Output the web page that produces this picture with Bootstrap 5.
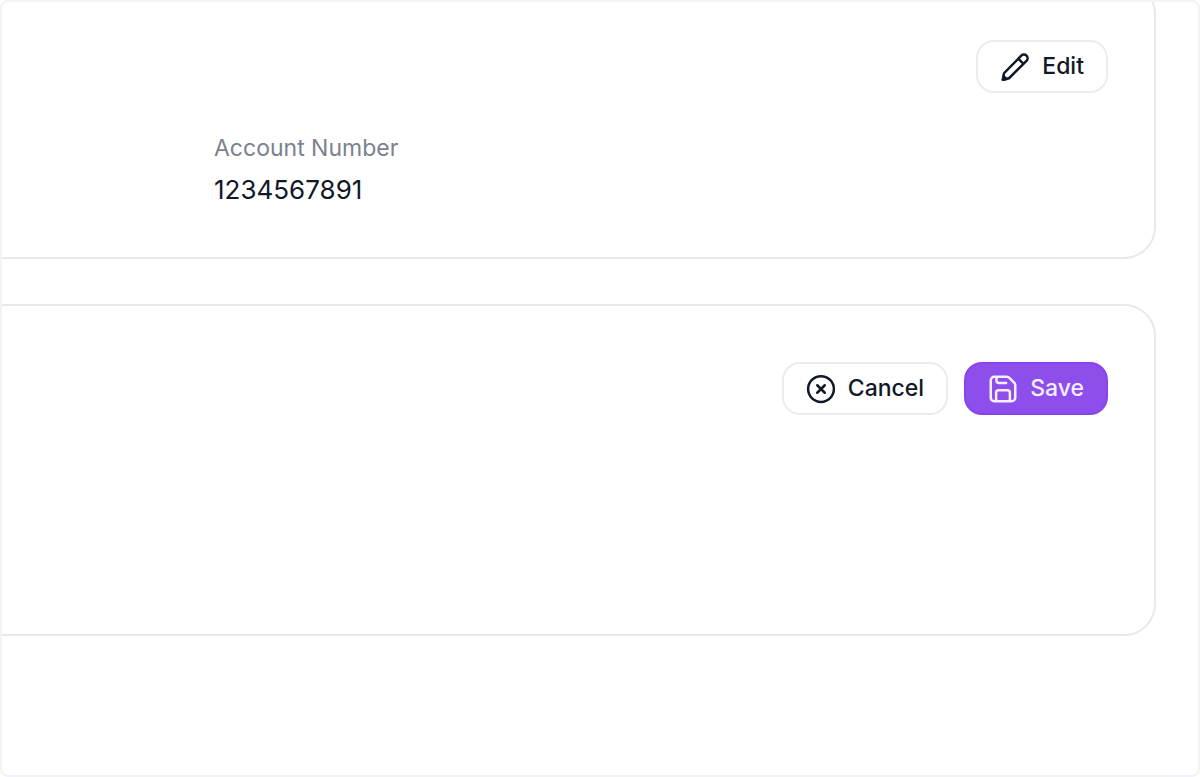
<!DOCTYPE html>
<html lang="en">
<head>
<meta charset="utf-8">
<meta name="viewport" content="width=device-width, initial-scale=1">
<title>Account details</title>
<link href="https://cdn.jsdelivr.net/npm/bootstrap@5.3.0/dist/css/bootstrap.min.css" rel="stylesheet">
<style>
  body { font-family: Inter, "Liberation Sans", sans-serif; color: #111827; }
  .frame { border: 2px solid #f3f3f7; border-radius: 8px; }
  .panel { border: 2px solid #e8e9ed; border-radius: 32px; margin-left: -48px; margin-right: 42px; padding: 56px 46px 52px; }
  .panel-first { margin-top: -20px; }
  .panel-editing { margin-top: 45px; min-height: 332px; }
  .action { --bs-btn-font-size: 23px; --bs-btn-font-weight: 500; --bs-btn-line-height: 31px; --bs-btn-padding-x: 22px; --bs-btn-padding-y: 9px; --bs-btn-border-width: 2px; --bs-btn-border-radius: 18px; gap: 12px; }
  .action-plain { --bs-btn-color: #111827; --bs-btn-bg: #fff; --bs-btn-border-color: #ebebf0; --bs-btn-hover-bg: #f9fafb; --bs-btn-hover-border-color: #e7e8ed; }
  .action-main { --bs-btn-color: #f5efff; --bs-btn-bg: #8e4eec; --bs-btn-border-color: #8a44ec; --bs-btn-hover-color: #fff; --bs-btn-hover-bg: #7c3aed; }
  .action svg { width: 30px; height: 30px; flex: none; fill: none; stroke: currentColor; stroke-width: 2; stroke-linecap: round; stroke-linejoin: round; }
  .details { padding-left: 212px; margin-top: 40px; }
  .details dt { font-size: 23px; line-height: 30px; color: #7b818d; }
  .details dd { font-size: 26px; line-height: 30px; margin-top: 12px; }
</style>
</head>
<body class="bg-white">
<main class="frame overflow-hidden min-vh-100">
  <section class="panel panel-first" aria-label="Account">
    <div class="d-flex justify-content-end">
      <button type="button" class="btn action action-plain d-inline-flex align-items-center">
        <svg viewBox="0 0 24 24" aria-hidden="true"><path d="M2.300 22.200l.900-5.200L17 2.900a2.900 2.900 0 0 1 4.200 4.200L7.200 21zM14.600 5.300l4.200 4.200"/><path fill="currentColor" d="M2.300 22.200l.500-2.900 2.400 2.400z"/></svg>
        Edit
      </button>
    </div>
    <dl class="details mb-0">
      <dt class="fw-normal">Account Number</dt>
      <dd class="mb-0">1234567891</dd>
    </dl>
  </section>
  <section class="panel panel-editing" aria-label="Edit account">
    <div class="d-flex justify-content-end gap-3">
      <button type="button" class="btn action action-plain d-inline-flex align-items-center">
        <svg viewBox="0 0 24 24" aria-hidden="true"><circle cx="12" cy="12" r="10.300"/><path d="M15 9l-6 6M9 9l6 6"/></svg>
        Cancel
      </button>
      <button type="button" class="btn action action-main d-inline-flex align-items-center">
        <svg viewBox="0 0 24 24" aria-hidden="true"><path d="M15 2.200a3 3 0 0 1 2.100.900l3.800 3.800a3 3 0 0 1 .900 2.100V19a2.800 2.800 0 0 1-2.800 2.800H5A2.800 2.800 0 0 1 2.200 19V5A2.800 2.800 0 0 1 5 2.200zM17.500 21.500V15a2 2 0 0 0-2-2h-7a2 2 0 0 0-2 2v6.500M6.800 2.500v2.700a2 2 0 0 0 2 2h5.700"/></svg>
        Save
      </button>
    </div>
  </section>
</main>
<script src="https://cdn.jsdelivr.net/npm/bootstrap@5.3.0/dist/js/bootstrap.bundle.min.js"></script>
</body>
</html>
